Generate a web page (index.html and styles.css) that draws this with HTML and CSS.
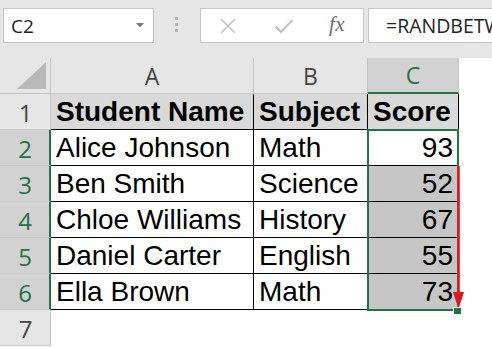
FILE: index.html
```html
<!DOCTYPE html>
<html>
<head>
<meta charset="utf-8">
<link rel="stylesheet" href="styles.css">
</head>
<body>
<div class="app">
  <div class="fbar">
    <div class="namebox">
      <span class="ref">C2</span>
      <svg class="dd" width="8" height="5" viewBox="0 0 8 5"><path d="M0 0h8l-4 4.5z" fill="#7a7a7a"/></svg>
    </div>
    <div class="grip"><i></i><i></i><i></i></div>
    <div class="btns">
      <svg class="ico-x" width="16" height="16" viewBox="0 0 16 16"><path d="M1 1L15 15M15 1L1 15" stroke="#c2c2c2" stroke-width="1.6" fill="none"/></svg>
      <svg class="ico-ok" width="20" height="16" viewBox="0 0 20 16"><path d="M1.5 8.5L7 14L18.5 2" stroke="#c2c2c2" stroke-width="2.2" fill="none"/></svg>
      <span class="fx">fx</span>
    </div>
    <div class="formula">=RANDBETWEEN(50,100)</div>
  </div>
  <div class="sheet">
    <div class="corner"><svg width="30" height="28" viewBox="0 0 30 28"><path d="M0 27L29 27L29 0z" fill="#b9b9b9"/></svg></div>
    <div class="ch">A</div>
    <div class="ch">B</div>
    <div class="ch sel">C</div>
    <div class="blank hrest"></div>

    <div class="rh">1</div>
    <div class="c hd">Student Name</div>
    <div class="c hd">Subject</div>
    <div class="c hd">Score</div>
    <div class="blank"></div>

    <div class="rh sel">2</div>
    <div class="c">Alice Johnson</div>
    <div class="c">Math</div>
    <div class="c num">93</div>
    <div class="blank"></div>

    <div class="rh sel">3</div>
    <div class="c">Ben Smith</div>
    <div class="c">Science</div>
    <div class="c num gray">52</div>
    <div class="blank"></div>

    <div class="rh sel">4</div>
    <div class="c">Chloe Williams</div>
    <div class="c">History</div>
    <div class="c num gray">67</div>
    <div class="blank"></div>

    <div class="rh sel">5</div>
    <div class="c">Daniel Carter</div>
    <div class="c">English</div>
    <div class="c num gray">55</div>
    <div class="blank"></div>

    <div class="rh sel">6</div>
    <div class="c">Ella Brown</div>
    <div class="c">Math</div>
    <div class="c num gray">73</div>
    <div class="blank"></div>

    <div class="rh">7</div>
    <div class="blank"></div>
    <div class="blank"></div>
    <div class="blank"></div>
    <div class="blank"></div>

    <div class="selbox"></div>
    <svg class="arrow" width="18" height="148" viewBox="0 0 18 148">
      <path d="M8.5 2V132" stroke="#e3161d" stroke-width="2.6" fill="none"/>
      <path d="M3 128H14L8.5 145z" fill="#e3161d"/>
    </svg>
    <div class="handle"></div>
  </div>
</div>
</body>
</html>
```
FILE: styles.css
```css
html, body {
  margin: 0;
  padding: 0;
  background: #ffffff;
}
.app {
  width: 492px;
  height: 347px;
  overflow: hidden;
  background: #ffffff;
}
.fbar {
  height: 58px;
  box-sizing: border-box;
  padding-top: 8px;
  background: #e6e6e6;
  display: flex;
  align-items: flex-start;
  font-family: "Open Sans", "Noto Sans", sans-serif;
}
.namebox {
  margin-left: 3px;
  width: 151px;
  height: 35px;
  box-sizing: border-box;
  background: #fff;
  border: 1px solid #c6c6c6;
  display: flex;
  align-items: center;
  padding-left: 7px;
  padding-right: 9px;
}
.ref {
  font-size: 19px;
  color: #222;
  flex: 1;
}
.dd {
  display: block;
}
.grip {
  margin-left: 21px;
  width: 3px;
  padding-top: 9px;
  display: flex;
  flex-direction: column;
  gap: 3px;
}
.grip i {
  display: block;
  width: 3px;
  height: 3px;
  background: #b4b4b4;
}
.btns {
  margin-left: 22px;
  width: 164px;
  height: 35px;
  box-sizing: border-box;
  background: #fff;
  border: 1px solid #c6c6c6;
  display: flex;
  align-items: center;
  padding-left: 19px;
}
.ico-x, .ico-ok {
  display: block;
}
.ico-ok {
  margin-left: 38px;
}
.fx {
  margin-left: 35px;
  font-family: "Liberation Serif", "DejaVu Serif", serif;
  font-style: italic;
  font-size: 21px;
  color: #6e6e6e;
  letter-spacing: 0.5px;
  margin-top: -2px;
}
.formula {
  margin-left: 4px;
  flex: 1;
  height: 35px;
  box-sizing: border-box;
  background: #fff;
  border: 1px solid #c6c6c6;
  border-right: none;
  padding-left: 17px;
  font-size: 19.5px;
  line-height: 33px;
  color: #222;
  white-space: nowrap;
  overflow: hidden;
}
.sheet {
  position: relative;
  display: grid;
  grid-template-columns: 51px 203px 114px 91px 1fr;
  grid-auto-rows: 36px;
  font-family: "Liberation Sans", Arial, sans-serif;
}
.corner {
  background: #e6e6e6;
  border-right: 1px solid #c4c4c4;
  border-bottom: 1px solid #c4c4c4;
  box-sizing: border-box;
  display: flex;
  align-items: flex-end;
  justify-content: flex-end;
  padding: 0 3px 3px 0;
}
.corner svg {
  display: block;
}
.ch, .rh {
  background: #e6e6e6;
  border-right: 1px solid #c4c4c4;
  border-bottom: 1px solid #c9c9c9;
  box-sizing: border-box;
  display: flex;
  align-items: center;
  justify-content: center;
  font-family: "Open Sans", "Noto Sans", sans-serif;
  font-size: 23px;
  color: #444;
}
.rh {
  font-size: 24px;
  padding-left: 1px;
  padding-top: 1px;
}
.ch.sel {
  background: #d2d2d2;
  color: #217346;
  border-bottom: 2px solid #217346;
}
.rh.sel {
  background: #d2d2d2;
  color: #217346;
  border-right: 2px solid #217346;
}
.hrest {
  background: #fff;
}
.blank {
  background: #fff;
}
.c {
  border-right: 1px solid #000;
  border-bottom: 1px solid #000;
  box-sizing: border-box;
  font-size: 28px;
  line-height: 34px;
  padding: 1px 4px 0 5px;
  color: #000;
  white-space: nowrap;
  overflow: hidden;
}
.c.hd {
  background: #d9d9d9;
  font-weight: bold;
}
.c.num {
  text-align: right;
  padding-right: 5px;
}
.c.gray {
  background: #c6c6c6;
}
.selbox {
  position: absolute;
  left: 367px;
  top: 71px;
  width: 92px;
  height: 182px;
  box-sizing: border-box;
  border: 2px solid #217346;
  pointer-events: none;
}
.arrow {
  position: absolute;
  left: 450px;
  top: 106px;
}
.handle {
  position: absolute;
  left: 453px;
  top: 249px;
  width: 7px;
  height: 6px;
  background: #217346;
  border-top: 1px solid #fff;
  border-left: 1px solid #fff;
}
```
